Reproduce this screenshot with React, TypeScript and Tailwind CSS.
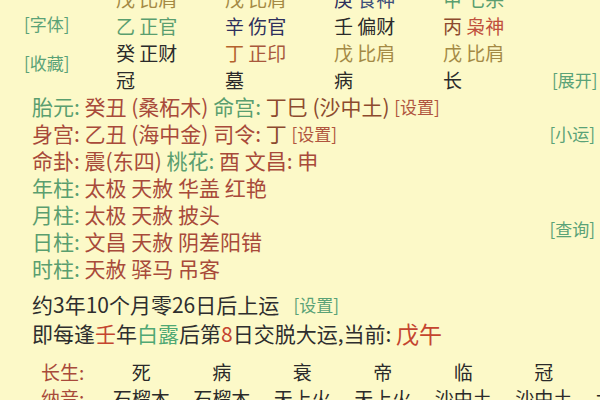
import React from "react";

const green = "text-[#5a9e6f]";
const red = "text-[#a84a3a]";
const brown = "text-[#8c4a2e]";
const olive = "text-[#a48a45]";
const navy = "text-[#2e2f5c]";
const ink = "text-[#2a2a2a]";

type Seg = [string, string];

function Cell({ segs }: { segs: Seg[] }) {
  return (
    <div className="flex items-center whitespace-pre">
      {segs.map(([t, c], i) => (
        <span key={i} className={c}>
          {t}
        </span>
      ))}
    </div>
  );
}

const grid: Seg[][][] = [
  [[["戊 比肩", olive]], [["戊 比肩", olive]], [["庚", navy], [" 食神", "text-[#3c4f7a]"]], [["甲 七杀", green]]],
  [[["乙 正官", green]], [["辛 伤官", navy]], [["壬 偏财", ink]], [["丙", brown], [" 枭神", "text-[#c0503c]"]]],
  [[["癸 正财", ink]], [["丁", "text-[#b4622e]"], [" 正印", "text-[#a8583c]"]], [["戊 比肩", olive]], [["戊 比肩", olive]]],
  [[["冠", ink]], [["墓", ink]], [["病", ink]], [["长", ink]]],
];

const lines: Seg[][] = [
  [["胎元: ", green], ["癸丑 (桑柘木) ", red], ["命宫: ", green], ["丁巳 (沙中土) ", brown]],
  [["身宫: ", red], ["乙丑 (海中金) ", red], ["司令: ", red], ["丁 ", brown]],
  [["命卦: ", red], ["震(东四) ", red], ["桃花: ", green], ["酉 文昌: 申", red]],
  [["年柱: ", green], ["太极 天赦 华盖 红艳", red]],
  [["月柱: ", green], ["太极 天赦 披头", red]],
  [["日柱: ", green], ["文昌 天赦 阴差阳错", red]],
  [["时柱: ", green], ["天赦 驿马 吊客", red]],
];

const changsheng = ["死", "病", "衰", "帝", "临", "冠", ""];
const nayin = ["石榴木", "石榴木", "天上火", "天上火", "沙中土", "沙中土", "大驿土"];

function Setting({ color }: { color: string }) {
  return <span className={`text-[17px] whitespace-nowrap ${color}`}>[设置]</span>;
}

export default function App() {
  return (
    <div className="w-[600px] h-[400px] overflow-hidden bg-[#fcf9c8] font-['Noto_Sans_CJK_SC',sans-serif]">
      {/* 四柱表格，顶行被裁掉一半 */}
      <div className="mt-[-15px] grid grid-cols-[92px_repeat(4,109px)_1fr] grid-rows-[repeat(4,27px)] pl-[24px] pr-[5px] text-[19px] leading-none">
        <div className="row-start-2 col-start-1 flex items-center whitespace-nowrap text-[17px] text-[#5aa277] -mt-[5px]">[字体]</div>
        <div className="row-start-3 row-span-2 col-start-1 flex items-center whitespace-nowrap text-[17px] text-[#5aa277] pb-[8px]">[收藏]</div>
        {grid.map((row, r) =>
          row.map((segs, c) => (
            <div
              key={`${r}-${c}`}
              style={{ gridRowStart: r + 1, gridColumnStart: c + 2 }}
              className="flex items-center"
            >
              <Cell segs={segs} />
            </div>
          ))
        )}
        <div className="row-start-4 col-start-6 justify-self-end flex items-center whitespace-nowrap text-[17px] text-[#5aa277]">[展开]</div>
      </div>

      {/* 神煞信息 */}
      <div className="flex pl-[32px] pr-[5px]">
        <div className="flex-1 flex flex-col text-[21px] leading-none">
          {lines.map((segs, i) => (
            <div key={i} className="h-[27px] flex items-center whitespace-pre">
              {segs.map(([t, c], j) => (
                <span key={j} className={c}>
                  {t}
                </span>
              ))}
              {i < 2 && <Setting color="text-[#b0553e]" />}
            </div>
          ))}
        </div>
        <div className="flex flex-col items-end whitespace-nowrap text-[17px] text-[#5aa277] leading-none">
          <div className="h-[27px] mt-[27px] flex items-center">[小运]</div>
          <div className="h-[27px] mt-[68px] flex items-center">[查询]</div>
        </div>
      </div>

      {/* 起运 */}
      <div className="mt-[8px] pl-[32px] flex flex-col leading-none">
        <div className="h-[28px] flex items-center whitespace-pre text-[21px] text-[#2e2e2e]">
          约3年10个月零26日后上运   <Setting color="text-[#5aa277]" />
        </div>
        <div className="h-[30px] flex items-center whitespace-pre text-[21px] text-[#2e2e2e]">
          即每逢<span className="text-[#c4452f]">壬</span>年<span className="text-[#4fa874]">白露</span>后第
          <span className="text-[#c4452f]">8</span>日交脱大运,当前: <span className="text-[23px] text-[#c4452f]">戊午</span>
        </div>
      </div>

      {/* 长生 / 纳音 */}
      <div className="mt-[10px] pl-[41px] grid grid-cols-[60px_repeat(7,80.5px)] grid-rows-[26px_26px] text-[19px] leading-none">
        <div className={`flex items-center ${red}`}>长生:</div>
        {changsheng.map((t, i) => (
          <div key={`c${i}`} className={`flex items-center justify-center ${ink}`}>
            {t}
          </div>
        ))}
        <div className={`flex items-center ${red}`}>纳音:</div>
        {nayin.map((t, i) => (
          <div key={`n${i}`} className={`flex items-center justify-center whitespace-nowrap ${ink}`}>
            {t}
          </div>
        ))}
      </div>
    </div>
  );
}
